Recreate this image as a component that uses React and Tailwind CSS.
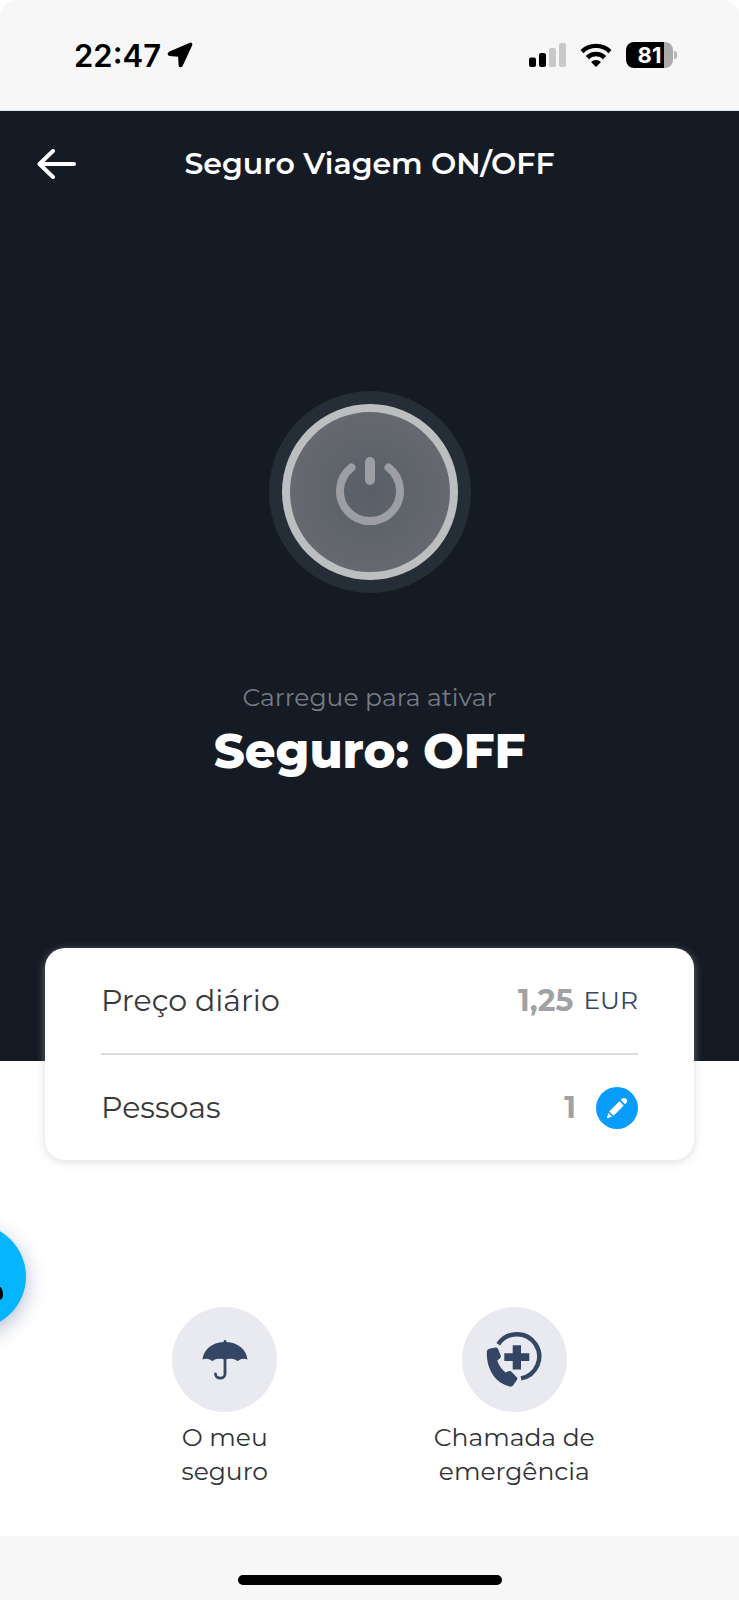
import { useState } from 'react'

const actions = [
  { label: ['O meu', 'seguro'], icon: UmbrellaIcon },
  { label: ['Chamada de', 'emergência'], icon: EmergencyIcon },
]

// ── Icons ───────────────────────────────────────────────────────────────────
function LocationIcon() {
  return (
    <svg width="26" height="26" viewBox="0 0 26 26" aria-hidden="true">
      <path
        d="M23.200 1.500 2.200 10.600c-1.100.6-.9 2.300.3 2.500l8.800.8c.4 0 .6.3.6.7l.5 8.600c.1 1.500 1.900 1.700 2.500.4L24.500 2.800c.3-.9-.4-1.600-1.300-1.300Z"
        stroke="#000" strokeWidth="1.600" strokeLinejoin="round"
      />
    </svg>
  )
}

function SignalIcon() {
  return (
    <svg width="37" height="24" viewBox="0 0 37 24" aria-hidden="true">
      <rect x="0" y="14.5" width="7" height="9.5" rx="2" />
      <rect x="10" y="10" width="7" height="14" rx="2" />
      <rect x="20" y="5" width="7" height="19" rx="2" fill="#c8c8c8" />
      <rect x="30" y="0" width="7" height="24" rx="2" fill="#c8c8c8" />
    </svg>
  )
}

function WifiIcon() {
  return (
    <svg width="32" height="24" viewBox="0 0 32 24" fill="none" stroke="#000" strokeWidth="4.4" aria-hidden="true">
      <path d="M2 8.600a20 20 0 0 1 28 0" />
      <path d="M7.300 14.600a12.300 12.300 0 0 1 17.400 0" />
      <path d="m16 24-5-5a7.200 7.200 0 0 1 10 0Z" fill="#000" stroke="none" />
    </svg>
  )
}

function BackIcon() {
  return (
    <svg width="40" height="30" viewBox="0 0 40 30" fill="none" stroke="currentColor" strokeWidth="4" strokeLinecap="round" strokeLinejoin="round" aria-hidden="true">
      <path d="M37 15H3M16 2 2.5 15 16 28" />
    </svg>
  )
}

function PowerIcon() {
  return (
    <svg width="68" height="70" viewBox="0 0 68 70" fill="none" stroke="#9c9ea3" strokeLinecap="round" aria-hidden="true">
      <path d="M15.5 10.5A30 30 0 1 0 52.5 10.5" strokeWidth="8" />
      <path d="M34 5v18" strokeWidth="10" />
    </svg>
  )
}

function PencilIcon() {
  return (
    <svg width="22" height="22" viewBox="0 0 22 22" fill="#fff" aria-hidden="true">
      <path d="M13.400 4.300 17.700 8.600 7.600 18.800 3.200 14.500Z" />
      <path d="m14.800 3 1.200-1.200c3-2.500 6.900 1.400 4.300 4.200l-1.300 1.300Z" />
      <path d="m2.400 15.900 3.700 3.700-4.200 1.400c-.6.2-1-.2-.9-.8Z" />
    </svg>
  )
}

function UmbrellaIcon() {
  return (
    <svg width="46" height="40" viewBox="0 0 46 40" aria-hidden="true">
      <path
        d="M23 0c.8 0 1.400.6 1.400 1.400V2.100C36 2.600 44.500 10 45.500 19.500c-2.500-1-5.500-1-7.800.3-1.300 1.500-3 1.500-4 0-2.700-1.300-6.200-1.300-9-.6h-3.400c-2.800-.7-6.300-.7-9 .6-1 1.500-2.700 1.500-4 0-2.300-1.300-5.300-1.300-7.800-.3C1.500 10 10 2.600 21.600 2.100V1.400C21.600.6 22.200 0 23 0Z"
        fill="#334666"
      />
      <path d="M23 18v16c0 5.500-9.500 5.500-9.500 0" fill="none" stroke="#334666" strokeWidth="2.800" strokeLinecap="round" />
    </svg>
  )
}

function EmergencyIcon() {
  return (
    <svg width="56" height="56" viewBox="0 0 56 56" fill="#334666" aria-hidden="true">
      <path d="M12.200 12.300A22.300 22.300 0 1 1 35 46.400" fill="none" stroke="#334666" strokeWidth="4.400" />
      <path d="M26.700 13.300H35v8h8.300V29H35v8.600h-8.300V29h-8.400v-7.700h8.400Z" />
      <path d="M3.500 16.800 9 15.600c1.600-.3 2.600.3 3.200 1.700l2.500 6.200c.5 1.300.2 2.200-.9 3.100l-2.500 2c1.500 4.900 4.300 9 8.400 12l2.600-1.300c1.200-.6 2.300-.4 3.200.5l5 5.200c1 1.100 1.100 2.100.2 3.300l-3.300 4.600c-1 1.300-2.200 1.800-3.900 1.500C8.500 51 .6 36.500.8 20.500c0-2 .8-3.300 2.700-3.700Z" />
    </svg>
  )
}

// ── Sections ────────────────────────────────────────────────────────────────
function StatusBar() {
  return (
    <div className="flex h-[111px] items-center justify-between rounded-t-2xl border-b border-[#dfe5ec] bg-[#f7f7f7] pl-[74px] pr-[62px] font-[Inter,sans-serif] text-black">
      <div className="flex items-center gap-1.5">
        <span className="text-[31px] leading-none font-semibold">22:47</span>
        <LocationIcon />
      </div>
      <div className="flex items-center gap-3.5">
        <SignalIcon />
        <WifiIcon />
        <div className="flex items-center gap-px">
          <div className="flex h-[26px] w-[47px] items-center justify-center rounded-lg bg-linear-to-r from-black from-81% to-[#ababab] to-81% text-[22px] leading-none font-bold text-white">
            81
          </div>
          <span className="h-2 w-[3px] rounded-r-full bg-[#b5b5b5]" />
        </div>
      </div>
    </div>
  )
}

export default function App() {
  const [active, setActive] = useState(false)
  const [people, setPeople] = useState(1)

  return (
    <div className="relative flex min-h-screen flex-col overflow-hidden bg-white font-[Montserrat,Inter,sans-serif]">
      <StatusBar />

      <main className="flex grow flex-col">
        <section className="flex flex-col items-center bg-[#141b25] pb-[280px] text-white">
          <header className="grid w-full grid-cols-[1fr_auto_1fr] items-center px-[37px] pt-8">
            <button type="button" aria-label="Voltar" className="justify-self-start">
              <BackIcon />
            </button>
            <h1 className="text-[30px] leading-[42px] font-semibold">Seguro Viagem ON/OFF</h1>
          </header>

          <button
            type="button"
            aria-label="Ativar seguro"
            aria-pressed={active}
            onClick={() => setActive(!active)}
            className="mt-[206px] rounded-full bg-[#252d36] p-[13px]"
          >
            <span className="flex size-44 items-center justify-center rounded-full border-8 border-[#bdbec0] bg-radial from-[#595f68] to-[#6b6d71]">
              <PowerIcon />
            </span>
          </button>

          <p className="mt-[88px] text-[25px] leading-8 text-[#777c84]">Carregue para ativar</p>
          <p className="mt-2 text-[48px] leading-[60px] font-extrabold">Seguro: {active ? 'ON' : 'OFF'}</p>
        </section>

        <section className="mx-[45px] -mt-[113px] rounded-[20px] bg-white px-14 text-[30px] text-[#38393d] shadow-[0_2px_8px_rgba(190,190,190,0.5)]">
          <div className="flex h-[107px] items-center justify-between border-b-2 border-[#dcdddf]">
            <span>Preço diário</span>
            <span className="flex items-center gap-2.5">
              <strong className="font-bold text-[#a0a2a5]">1,25</strong>
              <span className="text-[25px] text-[#334666]">EUR</span>
            </span>
          </div>
          <div className="flex h-[105px] items-center justify-between">
            <span>Pessoas</span>
            <span className="flex items-center gap-5">
              <strong className="font-bold text-[#a0a2a5]">{people}</strong>
              <button
                type="button"
                aria-label="Editar pessoas"
                onClick={() => setPeople(people + 1)}
                className="flex size-[42px] items-center justify-center rounded-full bg-[#099cfb]"
              >
                <PencilIcon />
              </button>
            </span>
          </div>
        </section>

        <nav className="mt-[147px] grid grid-cols-2 px-20 pb-10">
          {actions.map(({ label, icon: Icon }) => (
            <button key={label[0]} type="button" className="flex flex-col items-center gap-2 text-[25px] leading-[34px] text-[#2f3338]">
              <span className="flex size-[105px] items-center justify-center rounded-full bg-[#e9eaef]">
                <Icon />
              </span>
              <span>
                {label[0]}<br />{label[1]}
              </span>
            </button>
          ))}
        </nav>
      </main>

      {/* Chat bubble, docked half off the left edge */}
      <button
        type="button"
        aria-label="Assistente"
        className="absolute top-[1224px] -left-[79px] size-[105px] rounded-full bg-[#05b5ff] shadow-[0_6px_20px_rgba(40,60,120,0.35)]"
      >
        <svg width="105" height="105" viewBox="0 0 105 105" aria-hidden="true">
          <path d="M74 60c5 0 8 5 8 11 0 3-2 5-4 5H70Z" />
        </svg>
      </button>

      <footer className="flex h-16 justify-center bg-[#f7f7f7] pt-[39px]">
        <div className="h-2.5 w-[264px] rounded-full bg-black" />
      </footer>
    </div>
  )
}
